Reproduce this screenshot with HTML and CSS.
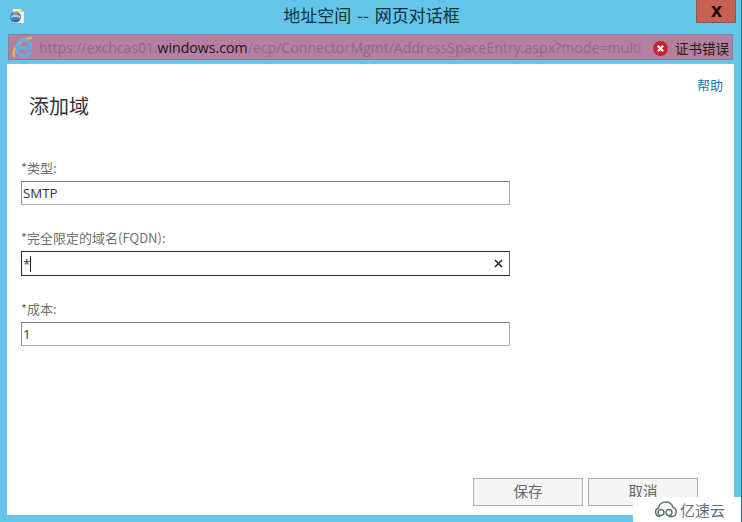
FILE: index.html
```html
<!DOCTYPE html>
<html lang="zh">
<head>
<meta charset="utf-8">
<title>地址空间</title>
<link rel="stylesheet" href="styles.css">
</head>
<body>
<div class="window">
  <header class="titlebar">
    <svg class="app-icon" width="16" height="16" viewBox="0 0 16 16">
      <path d="M4 1h8l3 3v11H4z" fill="#f6f2e2"/>
      <path d="M11 1l4 3h-4z" fill="#e6c45a"/>
      <circle cx="6.500" cy="9" r="5.500" fill="#3f82b5"/>
      <path d="M2 8q4-3.500 9 0v2q-5-2-9 0z" fill="#a9d0e2"/>
      <path d="M3 5q4-3 7-1l-2 2q-3-1-5-1z" fill="#d9963f"/>
      <path d="M3 12q4 2 7 0l-1 2H5z" fill="#2a5f8f"/>
    </svg>
    <div class="title">地址空间 -- 网页对话框</div>
    <button class="close">x</button>
  </header>
  <div class="addressbar">
    <svg class="ie-icon" width="22" height="23" viewBox="0 0 22 23">
      <path d="M2.500 21C-1 15 6 4 20 1.500" fill="none" stroke="#e8b93f" stroke-width="2.200"/>
      <path d="M5.500 12h13.500c.3-5-2.800-8-7-8-4.500 0-7.500 3.300-7.500 8s3 7.800 7.500 7.800c3.200 0 5.600-1.600 6.600-4.300" fill="none" stroke="#58b2e6" stroke-width="2.800"/>
    </svg>
    <div class="url"><span class="scheme">https://exchcas01.</span><b>windows.com</b><span>/ecp/ConnectorMgmt/AddressSpaceEntry.aspx?mode=multi</span></div>
    <svg class="err-icon" width="15" height="15" viewBox="0 0 15 15">
      <circle cx="7.500" cy="7.500" r="7.400" fill="#c9202c"/>
      <path d="M4.800 4.800l5.400 5.400M10.200 4.800l-5.400 5.400" stroke="#fff" stroke-width="2.200"/>
    </svg>
    <div class="cert">证书错误</div>
  </div>
  <main class="content">
    <a class="help">帮助</a>
    <h1 class="heading">添加域</h1>
    <form class="form">
      <div class="field">
        <label class="label">*类型:</label>
        <div class="input">SMTP</div>
      </div>
      <div class="field">
        <label class="label">*完全限定的域名(FQDN):</label>
        <div class="input focused"><span>*</span><i class="caret"></i><svg class="clear" width="9" height="9" viewBox="0 0 9 9"><path d="M1 1l7 7M8 1L1 8" stroke="#222" stroke-width="1.500"/></svg></div>
      </div>
      <div class="field">
        <label class="label">*成本:</label>
        <div class="input">1</div>
      </div>
    </form>
    <footer class="actions">
      <button class="btn">保存</button>
      <button class="btn">取消</button>
    </footer>
  </main>
</div>
<div class="watermark">
  <svg width="24" height="17" viewBox="0 0 24 17">
    <path d="M6 15.500a4.500 4.500 0 0 1-1.500-8.700A7.500 7.500 0 0 1 19 6.500a4.600 4.600 0 0 1-1 9h-3.500" fill="none" stroke="#5f6f78" stroke-width="1.400"/>
    <circle cx="7" cy="11.500" r="3" fill="none" stroke="#5f6f78" stroke-width="1.400"/>
    <circle cx="15" cy="11.500" r="3" fill="none" stroke="#5f6f78" stroke-width="1.400"/>
  </svg>
  <span>亿速云</span>
</div>
</body>
</html>
```

FILE: styles.css
```css
html, body {
  margin: 0;
  padding: 0;
}
body {
  width: 742px;
  height: 522px;
  box-sizing: border-box;
  overflow: hidden;
  position: relative;
  background: #63c6e9;
  border-right: 1px solid #1f6f86;
  font-family: "Noto Sans CJK SC", "Open Sans", sans-serif;
}
.window {
  display: flex;
  flex-direction: column;
  height: 522px;
  box-sizing: border-box;
  padding: 0 7px 7px 7px;
}
.titlebar {
  height: 34px;
  flex: none;
  display: flex;
  align-items: flex-start;
}
.app-icon {
  margin: 8px 0 0 2px;
  flex: none;
}
.title {
  flex: 1;
  text-align: center;
  font-size: 17px;
  line-height: 20px;
  word-spacing: 2px;
  margin-top: 5px;
  padding-left: 22px;
  color: #10303c;
}
.close {
  width: 40px;
  height: 23px;
  flex: none;
  margin-right: -2px;
  padding: 0 0 3px 1px;
  border: 1px solid #7a5f58;
  border-top: 0;
  background: #c75f53;
  color: #0c0c0c;
  font: bold 20px/20px "Liberation Sans", sans-serif;
}
.addressbar {
  height: 26px;
  flex: none;
  margin-left: 1px;
  margin-right: 1px;
  box-sizing: border-box;
  display: flex;
  align-items: center;
  background: #b5809f;
  border: 1px solid #83809f;
  font-size: 14px;
}
.ie-icon {
  flex: none;
  margin-left: 3px;
}
.url {
  width: 606px;
  flex: none;
  margin-left: 5px;
  padding-top: 2px;
  white-space: nowrap;
  overflow: hidden;
  color: #8e6a8b;
  font-family: "Open Sans", sans-serif;
  font-size: 14.150px;
  line-height: 20px;
}
.url .scheme {
  letter-spacing: -0.1px;
}
.url b {
  font-weight: 400;
  color: #1d1420;
}
.err-icon {
  flex: none;
  margin-left: 8px;
  margin-top: 2px;
}
.cert {
  margin-left: 7px;
  padding-top: 1px;
  font-size: 13.500px;
  line-height: 16px;
  color: #1f1a20;
  white-space: nowrap;
}
.content {
  flex: 1;
  margin-top: 4px;
  background: #fff;
  position: relative;
  display: flex;
  flex-direction: column;
  padding: 0 0 9px 14px;
  min-height: 0;
}
.help {
  position: absolute;
  top: 12px;
  right: 11px;
  font-size: 13px;
  line-height: 17px;
  color: #2a72b5;
}
.heading {
  margin: 28px 0 0 8px;
  font-size: 20px;
  line-height: 27px;
  font-weight: 400;
  color: #333;
}
.form {
  margin-top: 40px;
  display: flex;
  flex-direction: column;
  gap: 24px;
  flex: 1;
}
.field {
  display: flex;
  flex-direction: column;
  gap: 5px;
}
.label {
  font-size: 13px;
  line-height: 17px;
  color: #707070;
}
.input {
  width: 489px;
  height: 24px;
  box-sizing: border-box;
  display: flex;
  align-items: center;
  padding-left: 1px;
  border: 1px solid #b0b0b0;
  border-top-color: #808080;
  border-left-color: #8f8f8f;
  font-family: "Open Sans", sans-serif;
  font-size: 13.300px;
  color: #333;
}
.input.focused {
  height: 25px;
  border-color: #2b2b2b;
  border-right-color: #666;
}
.caret {
  width: 1px;
  height: 16px;
  background: #222;
}
.clear {
  margin-left: auto;
  margin-right: 6px;
}
.actions {
  display: flex;
  justify-content: flex-end;
  gap: 5px;
  padding-right: 36px;
}
.btn {
  width: 110px;
  height: 28px;
  padding: 0 0 4px;
  box-sizing: border-box;
  background: #f4f4f4;
  border: 1px solid #ababab;
  font-family: "Noto Sans CJK SC", sans-serif;
  font-size: 14.500px;
  color: #666;
}
.watermark {
  position: absolute;
  right: -1px;
  bottom: 0;
  width: 109px;
  height: 25px;
  background: #fff;
  display: flex;
  align-items: center;
  gap: 2px;
  box-sizing: border-box;
  padding-left: 21px;
  font-size: 15px;
  color: #5f6f78;
}
```
